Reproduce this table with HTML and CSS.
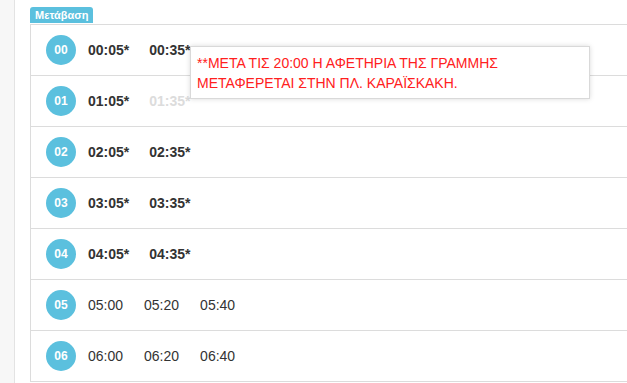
FILE: index.html
```html
<!DOCTYPE html>
<html lang="el">
<head>
<meta charset="utf-8">
<link rel="stylesheet" href="styles.css">
</head>
<body>
<div class="page">
  <aside class="strip"></aside>
  <main class="content">
    <span class="badge">Μετάβαση</span>
    <div class="table">
      <div class="row"><span class="hour">00</span><span class="t b">00:05*</span><span class="t b">00:35*</span>
        <div class="tip">**ΜΕΤΑ ΤΙΣ 20:00 Η ΑΦΕΤΗΡΙΑ ΤΗΣ ΓΡΑΜΜΗΣ<br>ΜΕΤΑΦΕΡΕΤΑΙ ΣΤΗΝ ΠΛ. ΚΑΡΑΪΣΚΑΚΗ.</div>
      </div>
      <div class="row"><span class="hour">01</span><span class="t b">01:05*</span><span class="t b faded">01:35*</span></div>
      <div class="row"><span class="hour">02</span><span class="t b">02:05*</span><span class="t b">02:35*</span></div>
      <div class="row"><span class="hour">03</span><span class="t b">03:05*</span><span class="t b">03:35*</span></div>
      <div class="row"><span class="hour">04</span><span class="t b">04:05*</span><span class="t b">04:35*</span></div>
      <div class="row"><span class="hour">05</span><span class="t">05:00</span><span class="t">05:20</span><span class="t">05:40</span></div>
      <div class="row"><span class="hour">06</span><span class="t">06:00</span><span class="t">06:20</span><span class="t">06:40</span></div>
    </div>
  </main>
</div>
</body>
</html>
```
FILE: styles.css
```css
html, body {
  margin: 0;
  padding: 0;
  background: #fff;
  font-family: "Liberation Sans", Arial, sans-serif;
  color: #333;
  overflow: hidden;
}
.page {
  display: flex;
  height: 383px;
}
.strip {
  width: 14px;
  flex: none;
  background: #f7f7f7;
  border-right: 1px solid #e3e3e3;
}
.content {
  flex: 1;
  padding: 7px 0 0 15px;
  display: flex;
  flex-direction: column;
  align-items: flex-start;
}
.badge {
  display: inline-block;
  background: #5bc0de;
  color: #fff;
  font-size: 11px;
  font-weight: bold;
  line-height: 16px;
  height: 16px;
  padding: 0 5px;
  border-radius: 3px 3px 0 0;
}
.table {
  align-self: stretch;
  border-left: 1px solid #dcdcdc;
  border-top: 1px solid #dcdcdc;
  margin-top: 1px;
}
.row {
  position: relative;
  display: flex;
  align-items: center;
  height: 50px;
  border-bottom: 1px solid #dcdcdc;
  padding-left: 15px;
}
.hour {
  width: 30px;
  height: 30px;
  border-radius: 50%;
  background: #5bc0de;
  color: #fff;
  font-size: 12px;
  font-weight: bold;
  display: flex;
  align-items: center;
  justify-content: center;
  margin-right: 12px;
  flex: none;
}
.t {
  font-size: 14px;
  margin-right: 21px;
  color: #333;
}
.t.b {
  font-weight: bold;
  margin-right: 20px;
}
.t.faded {
  color: #dcdcdc;
}
.tip {
  position: absolute;
  left: 159px;
  top: 21px;
  width: 386px;
  padding: 6px 6px 5px 6px;
  background: #fff;
  border: 1px solid #d9d9d9;
  box-shadow: 0 0 5px rgba(0, 0, 0, 0.15);
  color: #ff2020;
  font-size: 14px;
  line-height: 20px;
  z-index: 2;
}
```
